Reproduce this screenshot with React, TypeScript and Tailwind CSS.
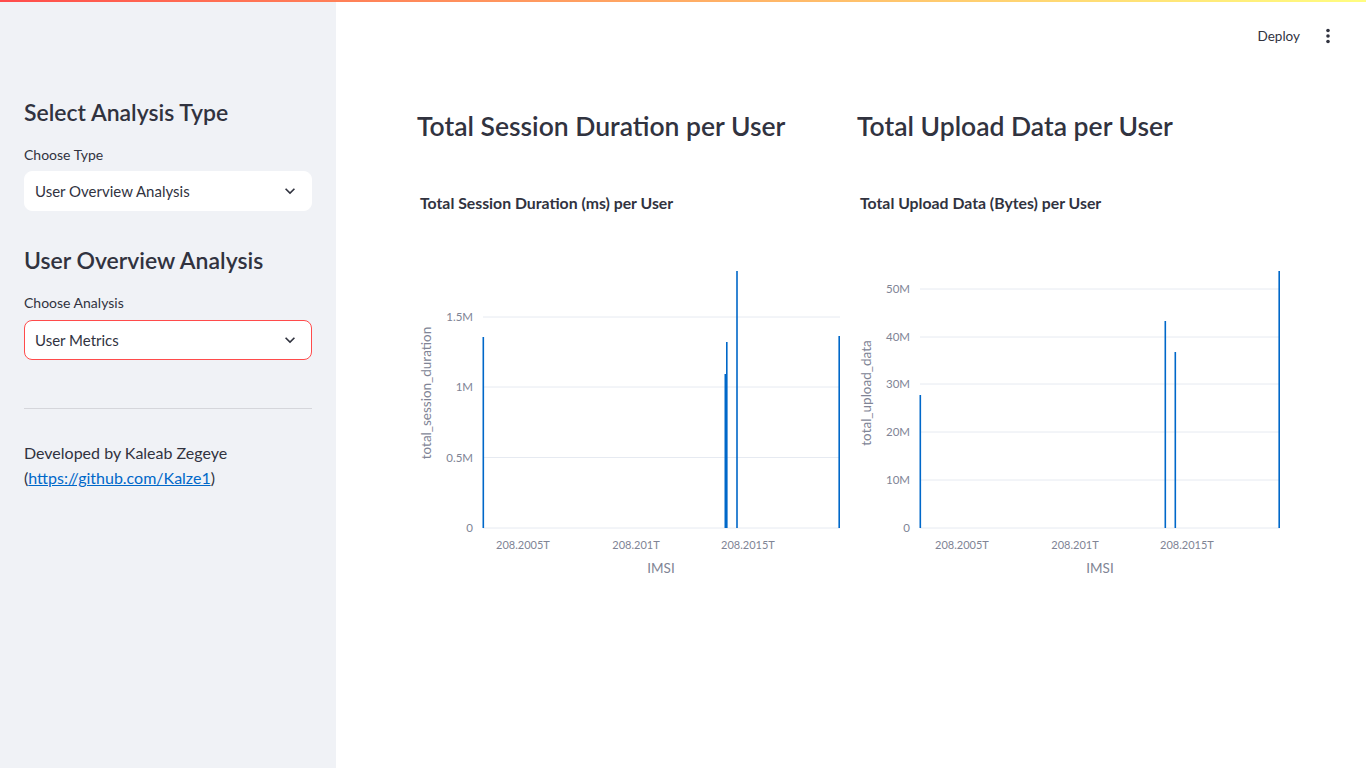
import React from 'react'

const FONT = '"Lato", "Noto Sans", "Liberation Sans", sans-serif'

function Chevron() {
  return (
    <svg width="20" height="20" viewBox="0 0 24 24" fill="#31333f">
      <path d="M16.59 8.59L12 13.17 7.41 8.59 6 10l6 6 6-6z" />
    </svg>
  )
}

function SelectBox({ value, active }: { value: string; active?: boolean }) {
  return (
    <div
      className={
        'flex items-center justify-between h-[40px] rounded-[8px] bg-white pl-[10px] pr-[11px] border ' +
        (active ? 'border-[#ff4b4b]' : 'border-white')
      }
    >
      <span className="text-[15px] text-[#31333f]">{value}</span>
      <Chevron />
    </div>
  )
}

type Bar = { x: number; top: number; w?: number }

interface ChartProps {
  title: string
  yTitle: string
  x0: number
  ticks: { y: number; label: string }[]
  tickX: number
  bars: Bar[]
  xTicks: { x: number; label: string }[]
  imsiX: number
}

function Chart({ title, yTitle, x0, ticks, tickX, bars, xTicks, imsiX }: ChartProps) {
  return (
    <div className="mt-[49px]">
      <div className="pl-[4px] h-[47px] text-[15.8px] leading-[20px] font-bold text-[#31333f]">{title}</div>
      <svg width="424" height="360" style={{ fontFamily: FONT }}>
        {ticks.map((t) => (
          <g key={t.label}>
            <line x1={x0} x2={424} y1={t.y} y2={t.y} stroke="#e6eaf1" strokeWidth="1" />
            <text x={tickX} y={t.y + 4} textAnchor="end" fontSize="11.5" fill="#808495">
              {t.label}
            </text>
          </g>
        ))}
        {bars.map((b, i) => (
          <rect key={i} x={b.x} y={b.top} width={b.w ?? 1.6} height={288 - b.top} fill="#0068c9" />
        ))}
        {xTicks.map((t) => (
          <text key={t.label} x={t.x} y={309} textAnchor="middle" fontSize="11" fill="#808495">
            {t.label}
          </text>
        ))}
        <text x={imsiX} y={333} textAnchor="middle" fontSize="13.5" fill="#808495">
          IMSI
        </text>
        <text
          x={0}
          y={0}
          transform={`translate(15 153) rotate(-90)`}
          textAnchor="middle"
          fontSize="13.5"
          fill="#808495"
        >
          {yTitle}
        </text>
      </svg>
    </div>
  )
}

export default function App() {
  return (
    <div className="relative w-[1366px] h-[768px] overflow-hidden bg-white" style={{ fontFamily: FONT }}>
      <div className="absolute top-0 left-0 right-0 h-[2px] bg-gradient-to-r from-[#ff4b4b] to-[#fffd80] z-10" />
      <div className="flex h-full">
        <aside className="w-[336px] h-full bg-[#f0f2f6] px-[24px] pt-[96px] text-[#31333f]">
          <h2 className="text-[23px] font-semibold leading-[32px]">Select Analysis Type</h2>
          <div className="mt-[18px] text-[14px] leading-[18px]">Choose Type</div>
          <div className="mt-[7px]">
            <SelectBox value="User Overview Analysis" />
          </div>
          <h2 className="mt-[33px] text-[23px] font-semibold leading-[32px]">User Overview Analysis</h2>
          <div className="mt-[18px] text-[14px] leading-[18px]">Choose Analysis</div>
          <div className="mt-[8px]">
            <SelectBox value="User Metrics" active />
          </div>
          <div className="mt-[48px] h-px bg-[#d5d6db]" />
          <div className="mt-[31px] text-[16px] leading-[25px]">
            Developed by Kaleab Zegeye
            <br />(
            <a className="text-[#0068c9] underline">https://github.com/Kalze1</a>)
          </div>
        </aside>
        <main className="flex-1 h-full">
          <div className="flex items-center justify-end h-[72px] pr-[26px] gap-[16px] text-[#31333f]">
            <span className="text-[13.5px]">Deploy</span>
            <svg width="24" height="24" viewBox="0 0 24 24" fill="#31333f">
              <circle cx="12" cy="6.5" r="1.8" />
              <circle cx="12" cy="12" r="1.8" />
              <circle cx="12" cy="17.5" r="1.8" />
            </svg>
          </div>
          <div className="ml-[80px] w-[864px] grid grid-cols-2 gap-[16px] pt-[36px]">
            <div>
              <h1 className="text-[26.5px] font-semibold leading-[36px] text-[#31333f] pl-[1px]">
                Total Session Duration per User
              </h1>
              <Chart
                title="Total Session Duration (ms) per User"
                yTitle="total_session_duration"
                x0={67}
                tickX={57}
                ticks={[
                  { y: 288, label: '0' },
                  { y: 217.5, label: '0.5M' },
                  { y: 147, label: '1M' },
                  { y: 77, label: '1.5M' },
                ]}
                bars={[
                  { x: 66.5, top: 97 },
                  { x: 308.5, top: 134, w: 2 },
                  { x: 310, top: 102 },
                  { x: 320.2, top: 31 },
                  { x: 422.4, top: 96 },
                ]}
                xTicks={[
                  { x: 107, label: '208.2005T' },
                  { x: 220, label: '208.201T' },
                  { x: 332, label: '208.2015T' },
                ]}
                imsiX={245}
              />
            </div>
            <div>
              <h1 className="text-[26.5px] font-semibold leading-[36px] text-[#31333f] pl-[1px]">
                Total Upload Data per User
              </h1>
              <Chart
                title="Total Upload Data (Bytes) per User"
                yTitle="total_upload_data"
                x0={64}
                tickX={54}
                ticks={[
                  { y: 288, label: '0' },
                  { y: 240, label: '10M' },
                  { y: 192, label: '20M' },
                  { y: 144, label: '30M' },
                  { y: 97, label: '40M' },
                  { y: 49, label: '50M' },
                ]}
                bars={[
                  { x: 63.5, top: 155 },
                  { x: 308.5, top: 81 },
                  { x: 318.5, top: 112 },
                  { x: 422.4, top: 31 },
                ]}
                xTicks={[
                  { x: 106, label: '208.2005T' },
                  { x: 219, label: '208.201T' },
                  { x: 331, label: '208.2015T' },
                ]}
                imsiX={244}
              />
            </div>
          </div>
        </main>
      </div>
    </div>
  )
}
